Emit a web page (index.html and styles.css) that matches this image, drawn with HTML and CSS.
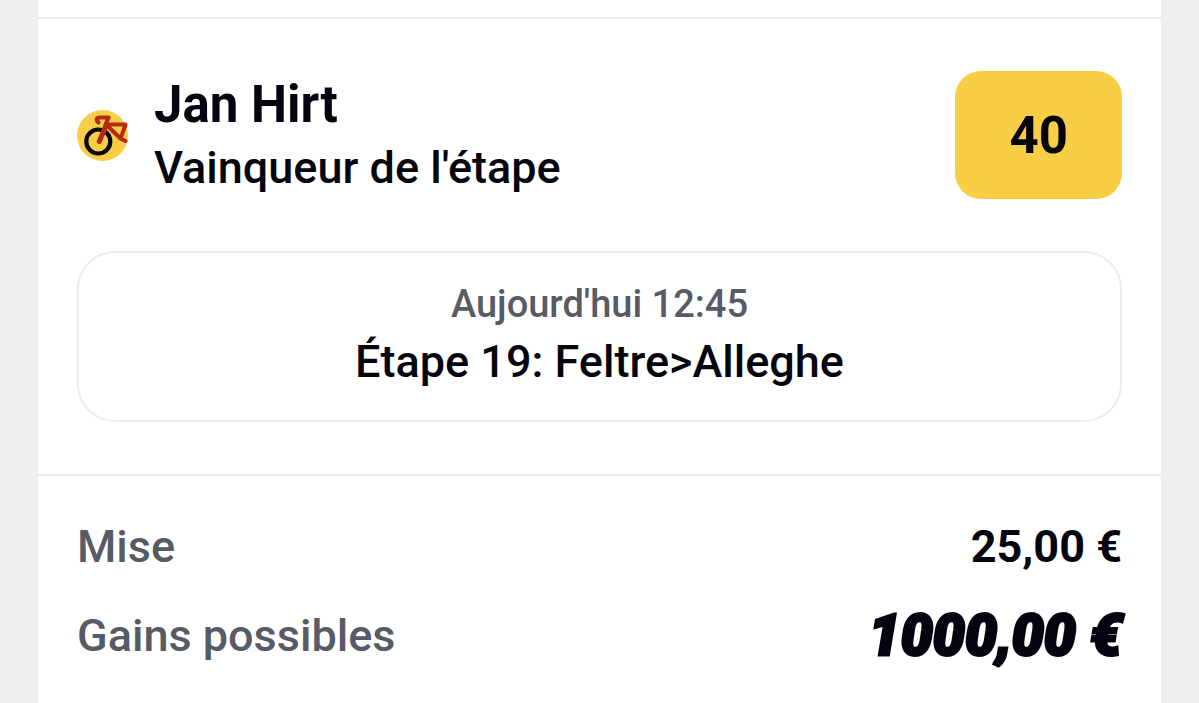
FILE: index.html
```html
<!DOCTYPE html>
<html lang="fr">
<head>
<meta charset="utf-8">
<meta name="viewport" content="width=device-width, initial-scale=1">
<title>Pari</title>
<link rel="stylesheet" href="styles.css">
</head>
<body>
<main class="ticket">
  <section class="bet">
    <header class="selection">
      <svg class="sport-icon" viewBox="0 0 51 51" aria-hidden="true">
        <circle cx="25.500" cy="25.500" r="25.500" fill="#f8ce46"/>
        <circle cx="21.300" cy="31.500" r="12" fill="none" stroke="#05050a" stroke-width="4.200"/>
        <g fill="none" stroke="#b52a12" stroke-linejoin="round" stroke-linecap="round">
          <path d="M22.300 31.500 29.500 14.500" stroke-width="5"/>
          <path d="M21.500 12.500C18.500 9.500 19.500 7.500 23 7.500H31.500L28.500 15" stroke-width="4.200"/>
          <path d="M29 14.500H48.500M29.500 15 43.500 28.500 48.500 15M43.500 28.500 48.500 31" stroke-width="4"/>
        </g>
      </svg>
      <div class="pick">
        <h1 class="name">Jan Hirt</h1>
        <p class="market">Vainqueur de l'étape</p>
      </div>
      <span class="odds">40</span>
    </header>
    <div class="event">
      <time class="event-time">Aujourd'hui 12:45</time>
      <p class="event-name">Étape 19: Feltre&gt;Alleghe</p>
    </div>
  </section>
  <dl class="totals">
    <div class="total">
      <dt class="label">Mise</dt>
      <dd class="stake">25,00 €</dd>
    </div>
    <div class="total">
      <dt class="label">Gains possibles</dt>
      <dd class="winnings">1000,00 €</dd>
    </div>
  </dl>
</main>
</body>
</html>
```
FILE: styles.css
```css
* { box-sizing: border-box; }
body {
  margin: 0;
  padding: 0 38px;
  background: #eeeff1;
  color: #05050f;
  font-family: Roboto, "Liberation Sans", sans-serif;
}
h1, p, dl, dd { margin: 0; }
.ticket {
  min-height: 100vh;
  padding-top: 17px;
  background: #fff;
}
.bet {
  padding: 52px 39px;
  border-top: 2px solid #ececee;
  border-bottom: 2px solid #ececee;
}
.selection {
  display: flex;
  align-items: center;
  gap: 26px;
}
.sport-icon { flex: none; width: 51px; height: 51px; }
.pick { flex: 1; }
.name { font-size: 51px; font-weight: 700; line-height: 66px; }
.market { font-size: 45px; font-weight: 500; line-height: 60px; }
.odds {
  padding: 2px 54px 0;
  border-radius: 26px;
  background: #f8ce46;
  color: #05050a;
  font-size: 51px;
  font-weight: 700;
  line-height: 126px;
}
.event {
  margin-top: 52px;
  padding: 22px 24px 29px;
  border: 2px solid #ececee;
  border-radius: 38px;
  text-align: center;
  font-weight: 500;
  line-height: 58px;
}
.event-time { display: block; color: #565b66; font-size: 38px; }
.event-name { font-size: 45px; }
.totals { padding: 26px 39px 0; }
.total {
  display: flex;
  align-items: center;
  justify-content: space-between;
  line-height: 89px;
}
.label { color: #565b66; font-size: 45px; font-weight: 500; }
.stake { font-size: 45px; font-weight: 700; }
.winnings {
  font-size: 57px;
  font-style: italic;
  font-weight: 900;
  -webkit-text-stroke: 3px #05050f;
}
```
